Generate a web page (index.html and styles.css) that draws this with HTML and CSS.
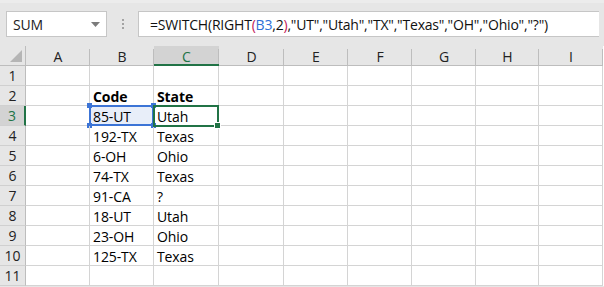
FILE: index.html
```html
<!DOCTYPE html>
<html>
<head>
<meta charset="utf-8">
<link rel="stylesheet" href="styles.css">
</head>
<body>
<div class="toolbar">
  <div class="namebox">
    <span class="name">SUM</span>
    <svg class="arrow" width="9" height="5" viewBox="0 0 9 5"><path d="M0 0H9L4.5 5Z" fill="#7b7b7b"/></svg>
  </div>
  <div class="dots"><i></i><i></i><i></i></div>
  <div class="formula">=SWITCH(RIGHT<span class="par">(</span><span class="ref">B3</span>,2<span class="par">)</span>,"UT","Utah","TX","Texas","OH","Ohio","?")</div>
</div>
<div class="sheet">
  <div class="corner"><svg width="12" height="12" viewBox="0 0 12 12"><path d="M12 0V12H0Z" fill="#b5b5b5"/></svg></div>
  <div class="ch">A</div><div class="ch">B</div><div class="ch sel">C</div><div class="ch">D</div><div class="ch">E</div><div class="ch">F</div><div class="ch">G</div><div class="ch">H</div><div class="ch">I</div>

  <div class="rh">1</div><div class="c"></div><div class="c"></div><div class="c"></div><div class="c"></div><div class="c"></div><div class="c"></div><div class="c"></div><div class="c"></div><div class="c"></div>
  <div class="rh">2</div><div class="c"></div><div class="c b">Code</div><div class="c b">State</div><div class="c"></div><div class="c"></div><div class="c"></div><div class="c"></div><div class="c"></div><div class="c"></div>
  <div class="rh sel">3</div><div class="c"></div><div class="c refcell">85-UT<i class="h tl"></i><i class="h tr"></i><i class="h bl"></i><i class="h br"></i></div><div class="c active">Utah<i class="fill"></i></div><div class="c"></div><div class="c"></div><div class="c"></div><div class="c"></div><div class="c"></div><div class="c"></div>
  <div class="rh">4</div><div class="c"></div><div class="c">192-TX</div><div class="c">Texas</div><div class="c"></div><div class="c"></div><div class="c"></div><div class="c"></div><div class="c"></div><div class="c"></div>
  <div class="rh">5</div><div class="c"></div><div class="c">6-OH</div><div class="c">Ohio</div><div class="c"></div><div class="c"></div><div class="c"></div><div class="c"></div><div class="c"></div><div class="c"></div>
  <div class="rh">6</div><div class="c"></div><div class="c">74-TX</div><div class="c">Texas</div><div class="c"></div><div class="c"></div><div class="c"></div><div class="c"></div><div class="c"></div><div class="c"></div>
  <div class="rh">7</div><div class="c"></div><div class="c">91-CA</div><div class="c">?</div><div class="c"></div><div class="c"></div><div class="c"></div><div class="c"></div><div class="c"></div><div class="c"></div>
  <div class="rh">8</div><div class="c"></div><div class="c">18-UT</div><div class="c">Utah</div><div class="c"></div><div class="c"></div><div class="c"></div><div class="c"></div><div class="c"></div><div class="c"></div>
  <div class="rh">9</div><div class="c"></div><div class="c">23-OH</div><div class="c">Ohio</div><div class="c"></div><div class="c"></div><div class="c"></div><div class="c"></div><div class="c"></div><div class="c"></div>
  <div class="rh">10</div><div class="c"></div><div class="c">125-TX</div><div class="c">Texas</div><div class="c"></div><div class="c"></div><div class="c"></div><div class="c"></div><div class="c"></div><div class="c"></div>
  <div class="rh">11</div><div class="c"></div><div class="c"></div><div class="c"></div><div class="c"></div><div class="c"></div><div class="c"></div><div class="c"></div><div class="c"></div><div class="c"></div>
</div>
</body>
</html>
```
FILE: styles.css
```css
* { box-sizing: border-box; }
html, body { margin: 0; padding: 0; }
body {
  width: 604px;
  height: 287px;
  overflow: hidden;
  background: #e6e6e6;
  font-family: "Open Sans", "DejaVu Sans", sans-serif;
  color: #000;
}
.toolbar {
  height: 46px;
  display: flex;
  align-items: flex-start;
  padding: 8px 0 0 6px;
  background: #e6e6e6;
  border-top: 3px solid #ececec;
}
.namebox {
  width: 101px;
  height: 26px;
  background: #fff;
  border: 1px solid #c6c6c6;
  display: flex;
  align-items: center;
  padding: 1px 6px 0 6px;
  justify-content: space-between;
}
.name {
  font-size: 14px;
  color: #222;
  letter-spacing: -0.2px;
}
.dots {
  width: 31px;
  height: 26px;
  display: flex;
  flex-direction: column;
  align-items: center;
  justify-content: center;
  gap: 2px;
}
.dots i {
  display: block;
  width: 2px;
  height: 2px;
  background: #a3a3a3;
}
.formula {
  width: 461px;
  height: 26px;
  background: #fff;
  border: 1px solid #c6c6c6;
  border-right: none;
  font-size: 14px;
  line-height: 24px;
  padding-top: 1px;
  padding-left: 11px;
  white-space: nowrap;
  letter-spacing: -0.2px;
  color: #111;
}
.par { color: #c2185b; }
.ref { color: #2f6fd6; }

.sheet {
  display: grid;
  grid-template-columns: 26px 64px 64px 65px 65px 64px 64px 64px 63px 64px;
  grid-auto-rows: 20px;
  background: #fff;
  font-size: 14px;
}
.corner {
  background: #e6e6e6;
  border-right: 1px solid #bdbdbd;
  border-bottom: 1px solid #bdbdbd;
  display: flex;
  align-items: flex-end;
  justify-content: flex-end;
  padding: 0 3px 3px 0;
}
.corner svg { display: block; }
.ch {
  background: #e6e6e6;
  border-bottom: 1px solid #bdbdbd;
  position: relative;
  text-align: center;
  line-height: 22px;
  font-size: 14px;
  color: #222;
}
.ch::after {
  content: "";
  position: absolute;
  right: 0;
  top: 3px;
  bottom: 0;
  width: 1px;
  background: #bdbdbd;
}
.ch.sel {
  background: #d3d3d3;
  border-bottom: 2px solid #217346;
  color: #217346;
}
.rh {
  background: #e6e6e6;
  border-right: 1px solid #bdbdbd;
  border-bottom: 1px solid #d0d0d0;
  text-align: center;
  line-height: 20px;
  font-size: 14px;
  color: #222;
}
.rh.sel {
  background: #d3d3d3;
  border-right: 2px solid #217346;
  color: #217346;
}
.c {
  border-right: 1px solid #d4d4d4;
  border-bottom: 1px solid #d4d4d4;
  line-height: 21px;
  padding-left: 3px;
  white-space: nowrap;
  position: relative;
  letter-spacing: -0.1px;
}
.b { font-weight: bold; }
.refcell { background: #e8eef9; }
.refcell::before {
  content: "";
  position: absolute;
  left: -1px;
  top: -1px;
  right: -1px;
  bottom: -1px;
  border: 2px solid #3c74d6;
  pointer-events: none;
}
.h {
  position: absolute;
  width: 5px;
  height: 5px;
  background: #3c74d6;
}
.tl { left: -3px; top: -3px; }
.tr { right: -3px; top: -3px; }
.bl { left: -3px; bottom: -3px; }
.br { right: -3px; bottom: -3px; }
.active { z-index: 2; }
.active::before {
  content: "";
  position: absolute;
  left: -1px;
  top: -1px;
  right: -1px;
  bottom: -2px;
  border: 2px solid #217346;
  z-index: 2;
}
.fill {
  position: absolute;
  right: -3px;
  bottom: -4px;
  width: 5px;
  height: 5px;
  background: #217346;
  border: 1px solid #fff;
  box-sizing: content-box;
  z-index: 3;
}
```
